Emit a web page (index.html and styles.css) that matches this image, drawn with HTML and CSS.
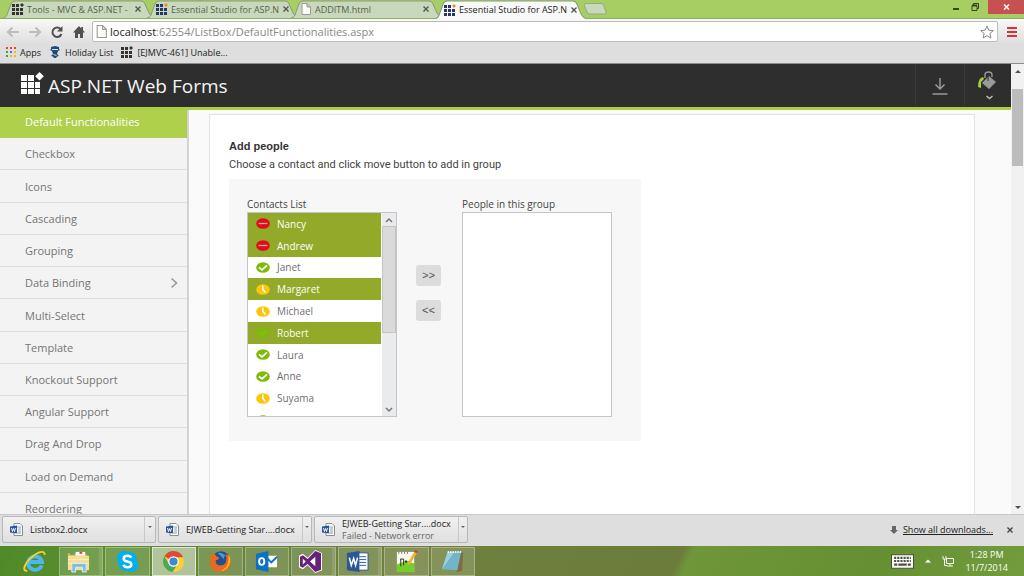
FILE: index.html
```html
<!DOCTYPE html>
<html lang="en">
<head>
<meta charset="utf-8">
<title>Essential Studio for ASP.NET</title>
<link rel="stylesheet" href="styles.css">
</head>
<body>
<svg class="defs" aria-hidden="true">
  <symbol id="tab-shape" viewBox="0 0 152 18" preserveAspectRatio="none"><path d="M0 18C4 17 4 15 5 12L8 4Q9 1 12 1H138Q141 1 142 4L146 13Q148 17 152 18" stroke="#8a9a78"/></symbol>
  <symbol id="grid-logo" viewBox="0 0 12 12"><path d="M0 1h3v3H0zM4 1h3v3H4zM0 5h3v3H0zM4 5h3v3H4zM8 5h3v3H8zM0 9h3v3H0zM4 9h3v3H4zM8 9h3v3H8z" fill="currentColor"/><path d="M10 0l2 2-2 2-2-2z"/></symbol>
  <symbol id="page" viewBox="0 0 10 12"><path d="M1 .5h5L9.500 4v7.500H1zM6 .5V4h3.500" fill="#fbfcf4" stroke="#9a9a9a"/></symbol>
  <symbol id="close" viewBox="0 0 8 8"><path d="M1.500 1.500l5 5m0-5l-5 5" stroke="currentColor" stroke-width="1.400"/></symbol>
  <symbol id="busy" viewBox="0 0 14 11"><ellipse cx="7" cy="5.500" rx="6.800" ry="5.300" fill="#e00b1b"/><path d="M2.500 5.500h9" stroke="#f3a092" stroke-width="1.300"/></symbol>
  <symbol id="online" viewBox="0 0 14 11"><ellipse cx="7" cy="5.500" rx="6.800" ry="5.300" fill="#7dbb08"/><path class="tick" d="M3 5.300l3 2.500 5-4.500" fill="none" stroke-width="1.700"/></symbol>
  <symbol id="away" viewBox="0 0 14 11"><ellipse cx="7" cy="5.500" rx="6.800" ry="5.300" fill="#fdc60b"/><path d="M6.800 1.500v4L9.500 8.500" fill="none" stroke="#fff" stroke-width="1.600"/></symbol>
  <symbol id="docx" viewBox="0 0 13 13"><path d="M4 .5h6L12.500 3v9.500H4z" fill="#fff" stroke="#8e8e8e"/><path d="M7 4h4M8 6h3M8 8h3M7 10h4" stroke="#8b9cb5"/><path d="M0 3.500l7-1v8l-7-1z" fill="#2b579a"/><path d="M1.500 5l1 3.500 1-3 1 3L5.500 5" fill="none" stroke="#fff" stroke-width=".9"/></symbol>
</svg>

<header class="browser">
  <div class="tabstrip">
    <nav class="tabs" aria-label="Browser tabs">
      <div class="tab"><svg class="tab-bg"><use href="#tab-shape"/></svg><svg class="fav dark"><use href="#grid-logo"/></svg><a href="#" class="tab-title">Tools - MVC &amp; ASP.NET -</a><button class="tab-close" aria-label="Close tab"><svg><use href="#close"/></svg></button></div>
      <div class="tab"><svg class="tab-bg"><use href="#tab-shape"/></svg><svg class="fav blue"><use href="#grid-logo"/></svg><a href="#" class="tab-title">Essential Studio for ASP.N</a><button class="tab-close" aria-label="Close tab"><svg><use href="#close"/></svg></button></div>
      <div class="tab"><svg class="tab-bg"><use href="#tab-shape"/></svg><svg class="fav"><use href="#page"/></svg><a href="#" class="tab-title">ADDITM.html</a><button class="tab-close" aria-label="Close tab"><svg><use href="#close"/></svg></button></div>
      <div class="tab active"><svg class="tab-bg"><use href="#tab-shape"/></svg><svg class="fav blue"><use href="#grid-logo"/></svg><a href="#" class="tab-title">Essential Studio for ASP.N</a><button class="tab-close" aria-label="Close tab"><svg><use href="#close"/></svg></button></div>
      <button class="new-tab" aria-label="New tab"><svg viewBox="0 0 24 12"><path d="M3 .5h15Q20 .5 20.500 2l2.500 7q1 2-1 2H7Q5 11 4 9L1.500 2.500Q1 .5 3 .5z" fill="#c8d8bc" stroke="#96ab7c"/></svg></button>
    </nav>
    <div class="window-controls">
      <button aria-label="Minimize"><svg viewBox="0 0 20 14"><path d="M5 9h6" stroke="#3a431f" stroke-width="2"/></svg></button>
      <button aria-label="Restore"><svg viewBox="0 0 20 14"><path d="M4 5.500h5v5H4zM5.500 5V3.500h5v5H9" fill="none" stroke="#3a431f"/><path d="M4 5.500h5" stroke="#3a431f" stroke-width="2"/></svg></button>
      <button class="win-close" aria-label="Close"><svg viewBox="0 0 34 14"><path d="M15 4.500l5 5m0-5l-5 5" stroke="#fff" stroke-width="1.500"/></svg></button>
    </div>
  </div>
  <div class="toolbar">
    <button aria-label="Back"><svg viewBox="0 0 16 14"><path d="M14 7H3M7.500 2.500L3 7l4.500 4.500" fill="none" stroke="#bdbdbd" stroke-width="2"/></svg></button>
    <button aria-label="Forward"><svg viewBox="0 0 16 14"><path d="M2 7h11M8.500 2.500L13 7l-4.500 4.500" fill="none" stroke="#bdbdbd" stroke-width="2"/></svg></button>
    <button aria-label="Reload"><svg viewBox="0 0 16 14"><path d="M12 4.500A4.700 4.700 0 1 0 12.500 9" fill="none" stroke="#515151" stroke-width="2"/><path d="M13.500 1v5.500H8z" fill="#515151"/></svg></button>
    <button aria-label="Home"><svg viewBox="0 0 16 14"><path d="M8 1L2 7.500h2V13h3V9h2v4h3V7.500h2L12 5.300V2h-1.700v1.500z" fill="#515151"/></svg></button>
    <div class="omnibox">
      <svg class="page-icon"><use href="#page"/></svg>
      <div class="url" role="textbox" aria-label="Address" contenteditable="true"><span class="host">localhost</span>:62554/ListBox/DefaultFunctionalities.aspx</div>
      <button class="star" aria-label="Bookmark"><svg viewBox="0 0 14 14"><path d="M7 1l1.800 4.200 4.500.4-3.400 3 1 4.400L7 10.700 3.100 13l1-4.400-3.400-3 4.500-.4z" fill="#fff" stroke="#888"/></svg></button>
    </div>
    <button class="menu" aria-label="Menu"><svg viewBox="0 0 10 10"><path d="M0 1h10M0 5h10M0 9h10" stroke="#e03030" stroke-width="2"/></svg></button>
  </div>
  <nav class="bookmarks" aria-label="Bookmarks">
    <a href="#"><svg class="apps" viewBox="0 0 10 10"><path d="M0 0h2v2H0zM4 0h2v2H4zM8 0h2v2H8z" fill="#ee4136"/><path d="M0 4h2v2H0zM0 8h2v2H0z" fill="#36a852"/><path d="M4 4h2v2H4z" fill="#2f7de1"/><path d="M8 4h2v2H8zM4 8h2v2H4zM8 8h2v2H8z" fill="#f3b917"/></svg>Apps</a>
    <a href="#"><svg class="fav" viewBox="0 0 12 12"><path d="M2 1l4-1 4 1v2l1 1-2 1-1 3 2 2-2 .5L7 12H5l-1-1.500L2 10l2-2-1-3-2-1 1-1z" fill="#1c4a7c"/><path d="M3 3.500h6M4.500 8.500l3 1" stroke="#d9e4ee"/></svg>Holiday List</a>
    <a href="#"><svg class="fav dark"><use href="#grid-logo"/></svg>[EJMVC-461] Unable...</a>
  </nav>
</header>

<div class="viewport">
  <div class="site">
    <header class="site-header">
      <svg class="brand-logo" viewBox="0 0 24 24"><path d="M1 3h6v6H1zM8 3h6v6H8zM1 10h6v6H1zM8 10h6v6H8zM15 10h5v6h-5zM1 17h6v5H1zM8 17h6v5H8zM15 17h5v5h-5zM19.500 0l4.300 4.300-4.300 4.300-4.300-4.300z" fill="#fff"/></svg>
      <h1>ASP.NET Web Forms</h1>
      <button class="head-btn download" aria-label="Download"><svg viewBox="0 0 18 18"><path d="M9 1v11M4.500 7.500L9 12l4.500-4.500M1.500 17h15" fill="none" stroke="#999" stroke-width="1.500"/></svg></button>
      <button class="head-btn theme" aria-label="Theme"><svg viewBox="0 0 20 30"><path d="M11 5l7 6-7 7-7-6z" fill="#999"/><path d="M7 7V4q0-3 3.500-3T14 4v2" fill="none" stroke="#999" stroke-width="1.400"/><path d="M10 5v5" stroke="#2e2e2e"/><path d="M5 6Q0 7 0 16l3 1v-6l3-3z" fill="#a5cd3a"/><path d="M8.500 25l3 2.500 3-2.500" fill="none" stroke="#bbb" stroke-width="1.500"/></svg></button>
    </header>
    <div class="site-body">
      <nav class="sidebar" aria-label="Samples">
        <a href="#" class="current">Default Functionalities</a>
        <a href="#">Checkbox</a>
        <a href="#">Icons</a>
        <a href="#">Cascading</a>
        <a href="#">Grouping</a>
        <a href="#">Data Binding<svg class="chevron" viewBox="0 0 8 12"><path d="M1.500 1.500L6.500 6l-5 4.500" fill="none" stroke="#999" stroke-width="1.600"/></svg></a>
        <a href="#">Multi-Select</a>
        <a href="#">Template</a>
        <a href="#">Knockout Support</a>
        <a href="#">Angular Support</a>
        <a href="#">Drag And Drop</a>
        <a href="#">Load on Demand</a>
        <a href="#">Reordering</a>
      </nav>
      <main class="sample">
        <h2>Add people</h2>
        <p>Choose a contact and click move button to add in group</p>
        <div class="picker">
          <section class="column">
            <h3 id="contacts">Contacts List</h3>
            <div class="listbox">
              <ul role="listbox" aria-labelledby="contacts" aria-multiselectable="true">
                <li role="option" aria-selected="true"><svg><use href="#busy"/></svg>Nancy</li>
                <li role="option" aria-selected="true"><svg><use href="#busy"/></svg>Andrew</li>
                <li role="option"><svg><use href="#online"/></svg>Janet</li>
                <li role="option" aria-selected="true"><svg><use href="#away"/></svg>Margaret</li>
                <li role="option"><svg><use href="#away"/></svg>Michael</li>
                <li role="option" aria-selected="true" class="faint"><svg><use href="#online"/></svg>Robert</li>
                <li role="option"><svg><use href="#online"/></svg>Laura</li>
                <li role="option"><svg><use href="#online"/></svg>Anne</li>
                <li role="option"><svg><use href="#away"/></svg>Suyama</li>
                <li role="option"><svg><use href="#online"/></svg></li>
              </ul>
              <div class="list-scroll">
                <button aria-label="Scroll up"><svg viewBox="0 0 8 6"><path d="M1 5l3-3 3 3" fill="none" stroke="#777" stroke-width="1.500"/></svg></button>
                <div class="list-thumb"></div>
                <div class="list-track"></div>
                <button aria-label="Scroll down"><svg viewBox="0 0 8 6"><path d="M1 1l3 3 3-3" fill="none" stroke="#777" stroke-width="1.500"/></svg></button>
              </div>
            </div>
          </section>
          <div class="moves">
            <button>&gt;&gt;</button>
            <button>&lt;&lt;</button>
          </div>
          <section class="column">
            <h3 id="group">People in this group</h3>
            <div class="listbox"><ul role="listbox" aria-labelledby="group"></ul></div>
          </section>
        </div>
      </main>
    </div>
  </div>
  <div class="page-scroll">
    <button aria-label="Scroll up"><svg viewBox="0 0 6 4"><path d="M0 4l3-3 3 3z" fill="#505050"/></svg></button>
    <div class="page-thumb"></div>
    <button class="down" aria-label="Scroll down"><svg viewBox="0 0 6 4"><path d="M0 0l3 3 3-3z" fill="#505050"/></svg></button>
  </div>
</div>

<footer class="downloads">
  <div class="download-item"><svg class="doc"><use href="#docx"/></svg><a href="#">Listbox2.docx</a><button aria-label="Options"></button></div>
  <div class="download-item"><svg class="doc"><use href="#docx"/></svg><a href="#">EJWEB-Getting Star....docx</a><button aria-label="Options"></button></div>
  <div class="download-item"><svg class="doc"><use href="#docx"/></svg><a href="#">EJWEB-Getting Star....docx<span>Failed - Network error</span></a><button aria-label="Options"></button></div>
  <div class="show-all"><svg viewBox="0 0 8 8"><path d="M2 0h4v4h2L4 8 0 4h2z" fill="#666"/></svg><a href="#">Show all downloads...</a><button aria-label="Close downloads"><svg><use href="#close"/></svg></button></div>
</footer>

<nav class="taskbar" aria-label="Taskbar">
  <div class="tasks">
    <button class="task plain" aria-label="Internet Explorer"><svg viewBox="0 0 24 24"><path d="M19.500 16A7.300 7 0 1 1 19.800 12.500H7" fill="none" stroke="#49b9ee" stroke-width="4"/><path d="M4.500 21.500C-1 23 1 15 8 8.500S23-.5 22.500 5" fill="none" stroke="#f4cf35" stroke-width="2"/></svg></button>
    <button class="task stacked" aria-label="File Explorer"><svg viewBox="0 0 24 24"><path d="M1 3h7l2 2h11v14H1z" fill="#d8b65d"/><path d="M3 2h5v3H3z" fill="#57ab54"/><path d="M9 2h10v4H9z" fill="#fff"/><path d="M13 3h3" stroke="#d74a36" stroke-width="2"/><path d="M1 6h22v15H1z" fill="#f5df95"/><path d="M1 10h22M1 14h22" stroke="#fff0b8"/><path d="M5 14h15v9h-4v-5H9v5H5z" fill="#83bce0" stroke="#d9edf9"/></svg></button>
    <button class="task" aria-label="Skype"><svg viewBox="0 0 24 24"><path d="M7 1q3 0 4 1 11-1 11 10 2 4 0 8-3 4-8 2Q3 23 2 13-1 3 7 1z" fill="#00aff0"/><path d="M16 8q-1-2-4-2-4 0-4 3 0 2 4 3t4 3q0 3-4 3-3 0-4.500-2.500" fill="none" stroke="#fff" stroke-width="2.600"/></svg></button>
    <button class="task on" aria-label="Chrome"><svg viewBox="0 0 24 24"><circle cx="12" cy="12" r="11" fill="#f8d22f"/><path d="M12 12L2.500 6.500A11 11 0 0 1 22 7.500H12z" fill="#dc4a38"/><path d="M2.500 6.500A11 11 0 0 0 11 23l5.500-8.500L12 17 7.500 15z" fill="#4ba85a"/><circle cx="12" cy="12" r="5.500" fill="#fff"/><circle cx="12" cy="12" r="4.300" fill="#4286d8"/></svg></button>
    <button class="task" aria-label="Firefox"><svg viewBox="0 0 24 24"><circle cx="12.500" cy="11" r="9.800" fill="#244d8f"/><path d="M9 3q5-1 8 3-2 1-1 4z" fill="#4b9cce"/><path d="M2.500 4Q4 5 6 4q1 3 5 4-1 2-4 3 0 6 6 5 4 0 5-5 1-4-2-7 7 2 7 9 0 10-11 10T1 12q0-5 1.500-8z" fill="#e66a1f"/><path d="M20 4q4 6 1 12-3 6-9 6 8-4 8-10 1-4 0-8z" fill="#f7b52c"/></svg></button>
    <button class="task" aria-label="Outlook"><svg viewBox="0 0 24 24"><path d="M11 6h12v12H11z" fill="#fff"/><path d="M12 8l5 5 6-6" fill="none" stroke="#0a72c5" stroke-width="2"/><path d="M1 4l13-3v22L1 20z" fill="#0a72c5"/><ellipse cx="7" cy="12" rx="2.700" ry="3.500" fill="none" stroke="#fff" stroke-width="2"/></svg></button>
    <button class="task stacked" aria-label="Visual Studio"><svg viewBox="0 0 24 24"><path d="M17 0l7 3v18l-7 3-8-8-5 4-4-2V6l4-2 5 4z" fill="#fff"/><path fill-rule="evenodd" d="M17 1l6 2.500v17L17 23l-8-8.500L4 18.500 1 17V7l3-1.500 5 4zM17 7l-5.500 5L17 17zM4 9v6l3-3z" fill="#68217a"/></svg></button>
    <button class="task stacked" aria-label="Word"><svg viewBox="0 0 24 24"><path d="M12 3h11v18H12z" fill="#fff" stroke="#2b579a"/><path d="M14 7h7M14 10h7M14 13h7M14 16h7" stroke="#2b579a"/><path d="M1 3l13-2v22L1 21z" fill="#2b579a"/><path d="M3.500 8l2 8L8 9l2 7 2-8" fill="none" stroke="#fff" stroke-width="1.600"/></svg></button>
    <button class="task" aria-label="Notepad++"><svg viewBox="0 0 24 24"><path d="M2 2h18v21H2z" fill="#f6f8ef"/><path d="M2 15q9-5 18-1v9H2z" fill="#75cf26"/><path d="M4 2v2M7 2v2M10 2v2M13 2v2" stroke="#777"/><path d="M6 9v8M6 9.500h3V16M10 12h3M11.500 10.500v3M14 12h3" fill="none" stroke="#26341c"/><path d="M13 16l1-4 6-10 3 1-7 11z" fill="#efb23b"/><path d="M20 2l1.500-2L24 1.500 23 3z" fill="#bd433b"/></svg></button>
    <button class="task" aria-label="Notepad"><svg viewBox="0 0 24 24"><path d="M20 2l3 1-1 19-6 1z" fill="#806c42"/><path d="M7 2h14l-4 19-16-1z" fill="#71b6c8"/><path d="M7 2h7L1 20z" fill="#9fd2df"/><path d="M7 2h14" stroke="#e9f5f7" stroke-width="2" stroke-dasharray="1.500 1"/></svg></button>
  </div>
  <div class="tray">
    <button aria-label="Touch keyboard"><svg class="keyboard" viewBox="0 0 22 14"><path d="M.5.5h21v13H.5z" fill="#fff" stroke="#46542b"/><path d="M3 3.500h16M3 6.500h16" stroke="#4b4f42" stroke-width="2" stroke-dasharray="2 1"/><path d="M3 10h3M7 10h8M16 10h3" stroke="#4b4f42" stroke-width="2"/></svg></button>
    <button aria-label="Show hidden icons"><svg class="caret" viewBox="0 0 6 4"><path d="M0 3.500l3-3 3 3z" fill="#fff"/></svg></button>
    <button aria-label="Network"><svg class="network" viewBox="0 0 12 12"><path d="M4.500 3.500h7v5h-7zM8 9v2M5 11h6M1 1v3h3V1M2.500 4v6.500H5" fill="none" stroke="#f4f7ea"/></svg></button>
    <time datetime="2014-11-07T13:28">1:28 PM<br>11/7/2014</time>
  </div>
</nav>
</body>
</html>
```

FILE: styles.css
```css
* { box-sizing: border-box; }
body {
  margin: 0;
  height: 100vh;
  display: flex;
  flex-direction: column;
  overflow: hidden;
  font-family: "Open Sans", "Noto Sans", sans-serif;
  font-size: 11px;
  color: #555;
}
button {
  padding: 0;
  border: 0;
  background: none;
  font: inherit;
  color: inherit;
  display: flex;
  align-items: center;
  justify-content: center;
}
a { color: inherit; text-decoration: none; }
h1, h2, h3, p, ul { margin: 0; padding: 0; font-weight: normal; }
ul { list-style: none; }
svg { flex: none; display: block; }
.defs { position: absolute; width: 0; height: 0; }
.tick { stroke: var(--tick, #fff); }

.browser { flex: none; background: linear-gradient(#f8f8f8 19px, #dedede 44px); border-bottom: 1px solid #8c8c8c; }
.tabstrip { height: 19px; display: flex; justify-content: space-between; background: #a6ce62; border-bottom: 1px solid #8fae5b; }
.tabs { display: flex; align-items: flex-end; padding-left: 3px; }
.tab { position: relative; width: 152px; height: 18px; margin-right: -8px; padding: 0 13px 0 9px; display: flex; align-items: center; gap: 3px; font-size: 9px; color: #56614d; }
.tab-bg { position: absolute; inset: 0; width: 100%; height: 18px; fill: #c8d8bc; }
.tab.active { z-index: 1; height: 19px; margin-bottom: -1px; color: #222; }
.tab.active .tab-bg { fill: #f8f8f8; height: 19px; }
.fav { position: relative; width: 12px; height: 12px; }
.dark { color: #333; fill: #333; }
.blue { color: #28356c; fill: #f28a1c; }
.tab-title { position: relative; flex: 1; white-space: nowrap; }
.tab-close { position: relative; color: #555; }
.tab-close svg { width: 8px; height: 8px; }
.new-tab { align-self: center; margin-left: 4px; }
.new-tab svg { width: 24px; height: 12px; }
.window-controls { display: flex; height: 14px; }
.window-controls button { width: 20px; }
.window-controls svg { height: 14px; }
.window-controls .win-close { width: 36px; background: #c75050; }

.toolbar { display: flex; align-items: center; padding: 2px 7px 1px 5px; gap: 6px; }
.toolbar > button svg { width: 16px; height: 14px; }
.toolbar > .menu svg { width: 10px; height: 10px; }
.omnibox { flex: 1; height: 21px; display: flex; align-items: center; gap: 3px; padding: 0 3px; margin: 0 3px 0 -1px; background: #fff; border: 1px solid #bcbcbc; border-radius: 2px; }
.page-icon { width: 11px; height: 13px; }
.url { flex: 1; font-size: 11px; color: #888; white-space: nowrap; }
.host { color: #222; }
.star svg { width: 14px; height: 14px; }
.bookmarks { height: 20px; display: flex; align-items: center; padding: 0 6px 2px; gap: 8px; font-size: 9px; color: #222; }
.bookmarks a { display: flex; align-items: center; gap: 4px; }
.apps { width: 10px; height: 10px; }

.viewport { flex: 1; min-height: 0; display: flex; }
.site { flex: 1; min-width: 0; display: flex; flex-direction: column; background: #fafafa; }
.site-header { z-index: 1; height: 46px; flex: none; display: flex; align-items: center; padding-left: 20px; background: #2e2e2e; border-bottom: 3px solid #a9ce43; }
.brand-logo { width: 24px; height: 24px; margin-bottom: 4px; }
.site-header h1 { flex: 1; padding-left: 4px; font-size: 19px; color: #f5f5f5; }
.head-btn { align-self: stretch; width: 49px; border-left: 1px solid #393939; }
.download svg { width: 18px; height: 18px; }
.theme { width: 47px; }
.theme svg { width: 20px; height: 30px; }

.site-body { flex: 1; min-height: 0; display: flex; overflow: hidden; margin-top: -4px; }
.sidebar { width: 189px; flex: none; margin-bottom: -11px; display: flex; flex-direction: column; background: #f3f3f3; border-right: 2px solid #d2d2ce; font-size: 11px; color: #757575; }
.sidebar a { flex: 1; display: flex; align-items: center; justify-content: space-between; padding: 0 9px 0 25px; border-bottom: 1px solid #dedede; }
.sidebar .current { background: #aed04b; color: #fff; border-color: #aed04b; }
.chevron { width: 8px; height: 12px; }

.sample { flex: 1; margin: 8px 36px -20px 20px; padding: 24px 19px; background: #fff; border: 1px solid #e2e4e4; }
.sample h2, .sample > p { font-size: 11px; line-height: 14px; color: #333; }
.sample h2 { font-family: "Liberation Sans", Arial, sans-serif; font-weight: bold; }
.sample > p { font-family: Roboto, "Liberation Sans", sans-serif; margin-top: 5px; color: #444; }
.picker { width: fit-content; margin-top: 7px; padding: 18px 29px 24px 18px; display: flex; background: #f7f7f7; }
.column h3 { font-size: 10px; line-height: 15px; color: #444; }
.listbox { width: 150px; height: 205px; display: flex; overflow: hidden; background: #fff; border: 1px solid #c5c5c5; }
.listbox ul { flex: 1; margin-bottom: -15px; display: flex; flex-direction: column; }
.listbox li { flex: 1; display: flex; align-items: center; gap: 7px; padding-left: 8px; font-size: 10px; color: #6f6f6f; }
.listbox li svg { width: 14px; height: 11px; }
.listbox li[aria-selected="true"] { background: #92a92a; color: #fff; }
.faint { --tick: #8fb52a; }
.list-scroll { width: 14px; margin-left: 1px; display: flex; flex-direction: column; background: #e9ebed; }
.list-scroll button { height: 13px; }
.list-scroll svg { width: 8px; height: 6px; }
.list-thumb { flex: 9; background: #dadada; border: 1px solid #c4c4c4; }
.list-track { flex: 6; }
.moves { display: flex; flex-direction: column; justify-content: center; gap: 14px; padding: 0 21px 28px 19px; }
.moves button { width: 25px; height: 21px; border-radius: 3px; background: #dcdcdc; font-family: "Liberation Mono", monospace; font-size: 11px; color: #555; }

.page-scroll { width: 13px; display: flex; flex-direction: column; background: #f1f1f1; padding: 0 1px; }
.page-scroll button { height: 13px; }
.page-scroll svg { width: 6px; height: 4px; }
.page-thumb { height: 77px; margin-top: 12px; background: #bcbcbc; }
.page-scroll .down { margin-top: auto; }

.downloads { height: 32px; flex: none; display: flex; align-items: center; gap: 2px; padding: 0 0 2px 2px; background: #dedede; border-top: 1px solid #c8c8c8; font-size: 9px; color: #222; }
.download-item { width: 154px; height: 27px; display: flex; align-items: center; gap: 7px; padding-left: 7px; background: linear-gradient(#f1f1f1, #dfdfdf); border: 1px solid #b8b8b8; border-radius: 2px; }
.download-item a { flex: 1; white-space: nowrap; line-height: 12px; }
.download-item span { display: block; color: #666; }
.doc { width: 13px; height: 13px; }
.download-item button { width: 11px; align-self: stretch; border-left: 1px solid #c8c8c8; }
.download-item button::after { content: ""; border: 2px solid transparent; border-top-color: #666; margin-bottom: 4px; }
.show-all { margin-left: auto; padding-right: 10px; display: flex; align-items: center; gap: 5px; }
.show-all svg { width: 8px; height: 8px; }
.show-all a { text-decoration: underline; }
.show-all button { margin-left: 8px; color: #444; }

.taskbar { height: 30px; flex: none; display: flex; align-items: center; padding: 0 16px 0 12px; background: linear-gradient(115deg, #4e8a28, #5f8e32 12%, #65813a 25%, #70813e 40%, #6c7c3b 66%, #6f973a 67%, #658f32 85%, #729c3c); }
.tasks { width: 463px; display: grid; grid-template-columns: repeat(10, 1fr); gap: 2px; }
.task { height: 29px; background: #ffffff26; border: 1px solid #ffffff4d; }
.task svg { width: 23px; height: 23px; }
.task.plain { background: none; border-color: transparent; }
.task.stacked { box-shadow: inset -3px 0 0 #ffffff1f; padding-right: 5px; }
.task.on { background: #ffffff80; border-color: #ffffff99; }
.tray { margin-left: auto; display: flex; align-items: center; gap: 11px; color: #fff; font-size: 9px; line-height: 13px; text-align: center; }
.keyboard { width: 23px; height: 15px; }
.caret { width: 6px; height: 4px; }
.network { width: 12px; height: 12px; }
```
